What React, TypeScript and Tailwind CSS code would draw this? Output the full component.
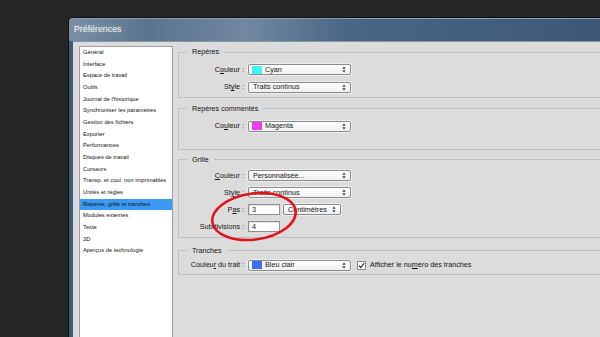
import React from 'react';

const listItems = [
  'Général',
  'Interface',
  'Espace de travail',
  'Outils',
  "Journal de l'historique",
  'Synchroniser les paramètres',
  'Gestion des fichiers',
  'Exporter',
  'Performances',
  'Disques de travail',
  'Curseurs',
  'Transp. et coul. non imprimables',
  'Unités et règles',
  'Repères, grille et tranches',
  'Modules externes',
  'Texte',
  '3D',
  'Aperçus de technologie',
];

const Arrows = () => (
  <svg width="4" height="7" viewBox="0 0 4 7" className="shrink-0">
    <path d="M2 0.5 L3.6 2.8 L0.4 2.8 Z" fill="#333" />
    <path d="M2 6.5 L3.6 4.2 L0.4 4.2 Z" fill="#333" />
  </svg>
);

interface SelectProps {
  label: string;
  swatch?: string;
  width?: string;
}

const Select: React.FC<SelectProps> = ({ label, swatch, width = 'w-[103px]' }) => (
  <div
    className={`${width} h-[11px] flex items-center bg-gradient-to-b from-white to-[#efefef] border border-[#8c8c8c] rounded-[2px] pl-[3px] pr-[4px] shadow-[0_0_0_1px_#ececec]`}
  >
    {swatch && <span className={`w-[10px] h-[8px] mr-[3px] shrink-0 ${swatch}`} />}
    <span className={`flex-1 leading-none whitespace-nowrap ${swatch ? '' : 'pl-[1px]'}`}>{label}</span>
    <Arrows />
  </div>
);

const Field = ({ value }: { value: string }) => (
  <div className="w-[32px] h-[11.5px] flex items-center bg-white border border-[#8f8f8f] pl-[3px] leading-none shadow-[inset_1px_1px_0_#e2e2e2]">
    {value}
  </div>
);

const Row = ({ label, children }: { label: React.ReactNode; children: React.ReactNode }) => (
  <div className="h-[11px] flex items-center gap-[4px]">
    <div className="w-[60px] shrink-0 text-right whitespace-nowrap leading-none">{label}</div>
    {children}
  </div>
);

const Group = ({
  title,
  className,
  children,
}: {
  title: string;
  className: string;
  children: React.ReactNode;
}) => (
  <fieldset className={`w-[440px] border border-[#c0c0c0] pl-[5px] flex flex-col ${className}`}>
    <legend className="ml-[3px] px-[5px] text-[7.2px] leading-[8px]">{title}</legend>
    {children}
  </fieldset>
);

export default function App() {
  return (
    <div className="relative w-[600px] h-[337px] overflow-hidden bg-[#262626] pt-[17px] pl-[68px] font-['Liberation_Sans',Arial,sans-serif]">
      <div className="w-[560px] h-[330px] flex flex-col rounded-tl-[5px] border-l border-t border-[#101010] bg-[#3f5a78]">
        {/* Title bar */}
        <div className="h-[23px] shrink-0 flex items-center pl-[5px] rounded-tl-[4px] border-t border-[#8ba0b4] bg-[linear-gradient(90deg,#7a8fa3_0%,#5b748e_14%,#7088a0_32%,#4a6685_50%,#3c5776_100%)]">
          <span className="text-[8.8px] text-[#f4f6f8] [text-shadow:0_0_4px_rgba(255,255,255,0.35)]">
            Préférences
          </span>
        </div>

        {/* Client area */}
        <div className="flex-1 ml-[4px] flex items-start bg-[#dcdcdc] border-t border-[#8197ab] pl-[6px] pt-[4px]">
          {/* Category list */}
          <div className="w-[94px] h-[300px] shrink-0 bg-white border border-[#9f9f9f] flex flex-col text-[5.75px] text-[#111]">
            {listItems.map((item) => (
              <div
                key={item}
                className={`h-[11.67px] leading-[11.67px] pl-[3px] whitespace-nowrap ${
                  item === 'Repères, grille et tranches' ? 'bg-[#3b99f3]' : ''
                }`}
              >
                {item}
              </div>
            ))}
          </div>

          {/* Settings */}
          <div className="ml-[5px] pt-[2px] flex flex-col text-[7.2px] text-[#141414]">
            <Group title="Repères" className="pt-[8px] pb-[4px] gap-[6.5px]">
              <Row label={<>C<u>o</u>uleur :</>}>
                <Select label="Cyan" swatch="bg-[#3ef4f4]" />
              </Row>
              <Row label={<>St<u>y</u>le :</>}>
                <Select label="Traits continus" />
              </Row>
            </Group>

            <Group title="Repères commentés" className="mt-[7px] pt-[8px] pb-[17px]">
              <Row label={<>Co<u>u</u>leur :</>}>
                <Select label="Magenta" swatch="bg-[#f03cf0]" />
              </Row>
            </Group>

            <Group title="Grille" className="mt-[6px] pt-[6.5px] pb-[5px] gap-[6px]">
              <Row label={<><u>C</u>ouleur :</>}>
                <Select label="Personnalisée..." />
              </Row>
              <Row label={<>St<u>y</u>le :</>}>
                <Select label="Traits continus" />
              </Row>
              <Row label={<>P<u>a</u>s :</>}>
                <Field value="3" />
                <div className="ml-[-1px]">
                  <Select label="Centimètres" width="w-[58px]" />
                </div>
              </Row>
              <Row label={<>Subd<u>i</u>visions :</>}>
                <Field value="4" />
              </Row>
            </Group>

            <Group title="Tranches" className="mt-[8.5px] pt-[5px] pb-[3.5px]">
              <Row label={<>Couleu<u>r</u> du trait :</>}>
                <Select label="Bleu clair" swatch="bg-[#3d6cf5]" />
                <div className="ml-[2px] w-[9px] h-[9px] flex items-center justify-center bg-white border border-[#8a8a8a]">
                  <svg width="7" height="7" viewBox="0 0 7 7">
                    <path d="M1 3.6 L2.8 5.6 L6.2 1" stroke="#222" strokeWidth="1.2" fill="none" />
                  </svg>
                </div>
                <span className="whitespace-nowrap leading-none">
                  Afficher le nu<u>m</u>éro des tranches
                </span>
              </Row>
            </Group>
          </div>
        </div>
      </div>

      {/* Red annotation circle */}
      <svg
        className="absolute left-[206px] top-[188px] pointer-events-none"
        width="96"
        height="58"
        viewBox="0 0 96 58"
      >
        <ellipse
          cx="48"
          cy="28.5"
          rx="42"
          ry="23"
          transform="rotate(-8 48 28.5)"
          fill="none"
          stroke="#e0141c"
          strokeWidth="2.6"
        />
      </svg>
    </div>
  );
}
